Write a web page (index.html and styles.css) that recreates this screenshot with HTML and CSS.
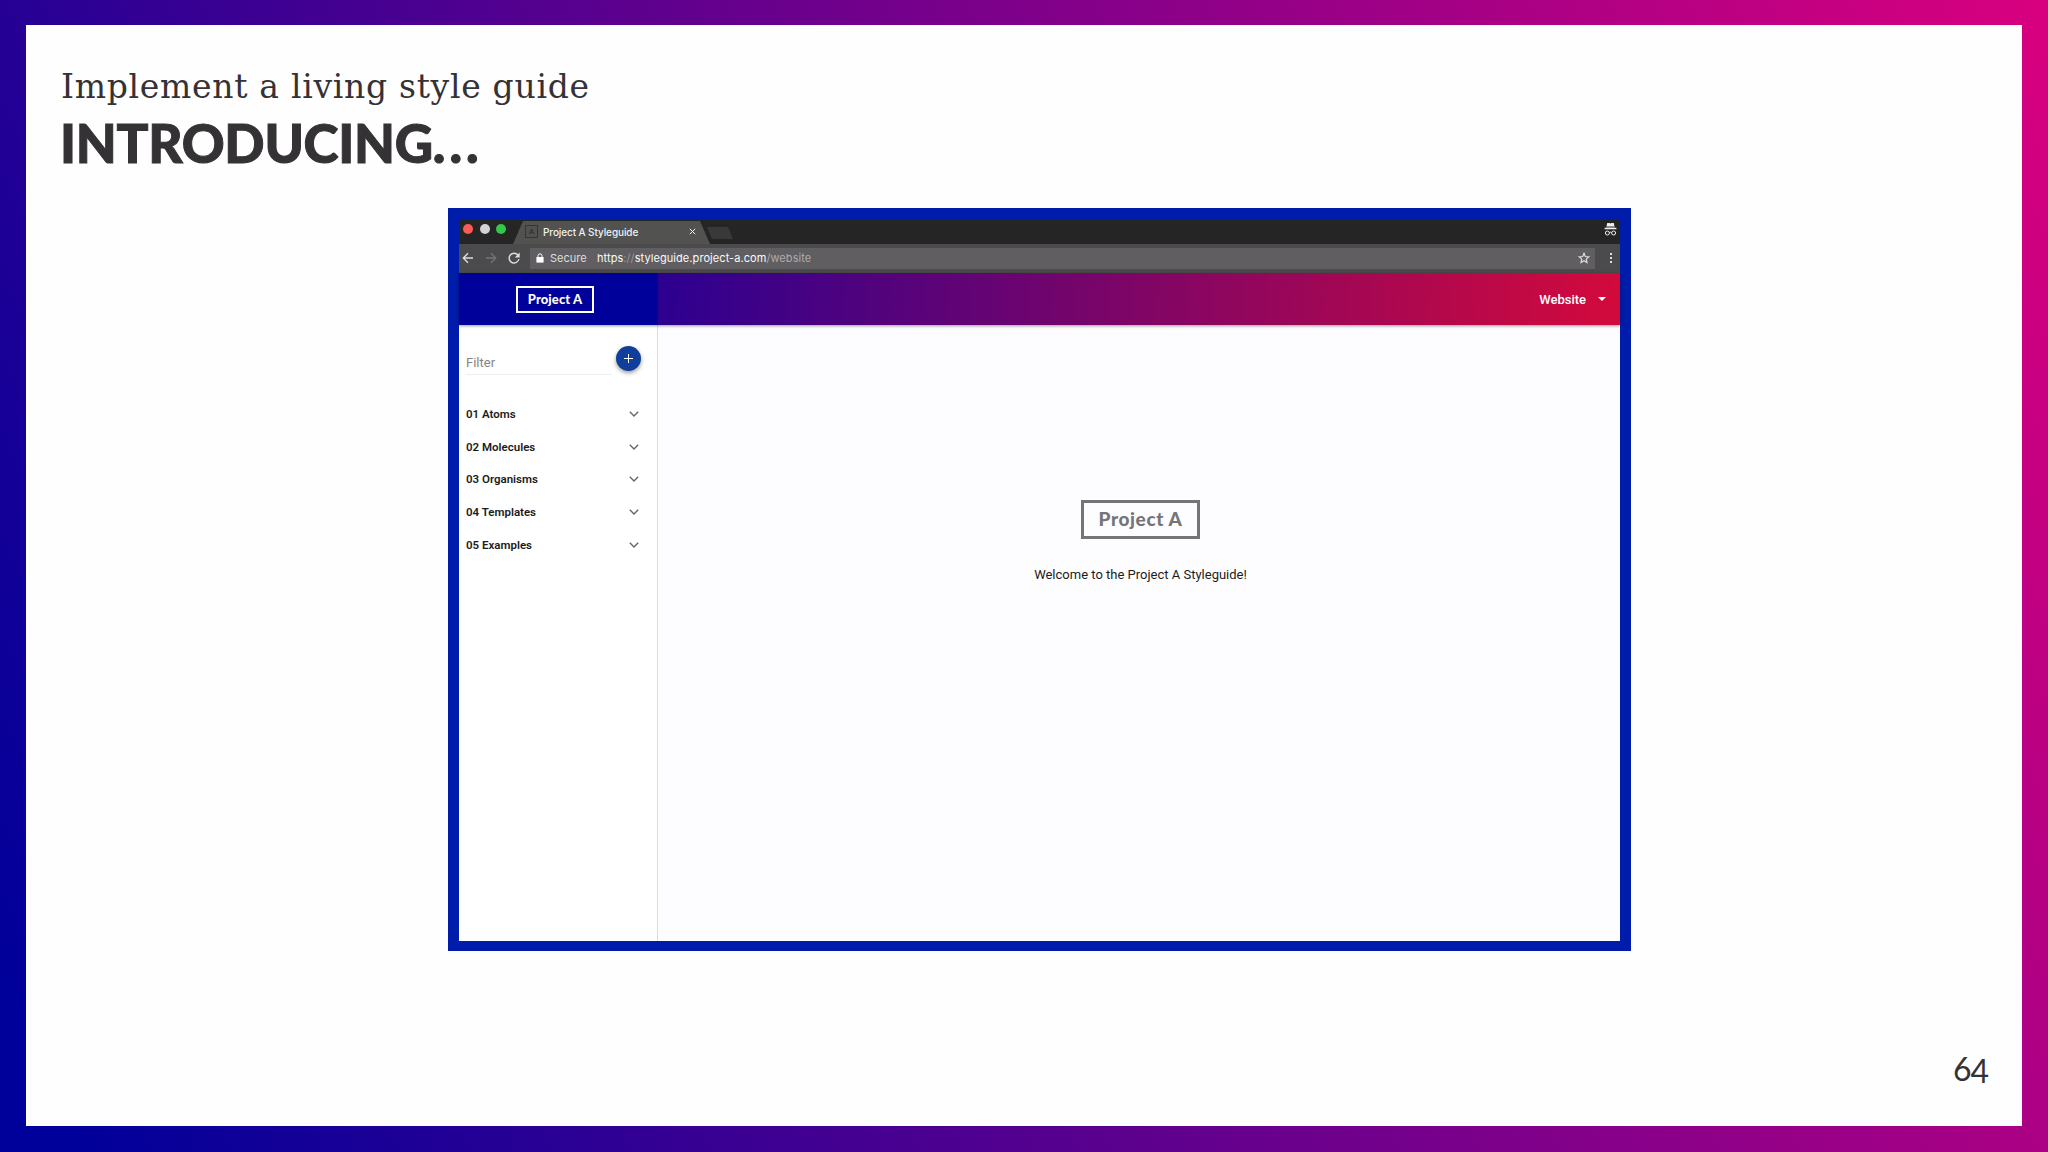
FILE: index.html
```html
<!DOCTYPE html>
<html lang="en">
<head>
    <meta charset="utf-8">
    <title>Introducing...</title>
    <link rel="stylesheet" href="styles.css">
</head>
<body>
    <div class="slide">
        <header class="slide-header">
            <p class="kicker">Implement a living style guide</p>
            <h1>INTRODUCING<span class="dots">...</span></h1>
        </header>

        <div class="browser">
            <div class="tab-strip">
                <div class="lights">
                    <span class="light red"></span>
                    <span class="light grey"></span>
                    <span class="light green"></span>
                </div>
                <div class="tab">
                    <span class="favicon">A</span>
                    <span class="tab-title">Project A Styleguide</span>
                    <svg class="tab-close" viewBox="0 0 7 7"><path d="M.8.8l5.4 5.4M6.2.8L.8 6.2"/></svg>
                </div>
                <span class="new-tab"></span>
                <svg class="incognito" viewBox="0 0 13 13">
                    <path class="solid" d="M3.2 0h2.1l1.2.5L7.7 0h2.1l.6 3H2.6zM2.4 3.5h8.2v.8H2.4zM.6 4.7h11.8v1.5H.6z"/>
                    <circle cx="3.4" cy="10" r="2"/>
                    <circle cx="9.6" cy="10" r="2"/>
                    <path d="M5.4 9.6q1.1-.8 2.2 0"/>
                </svg>
            </div>

            <div class="toolbar">
                <svg class="nav-icon back" viewBox="0 0 12 12"><path d="M11 6H1.5M6 1.3L1.3 6 6 10.7"/></svg>
                <svg class="nav-icon forward" viewBox="0 0 12 12"><path d="M1 6h9.5M6 1.3L10.7 6 6 10.7"/></svg>
                <svg class="nav-icon reload" viewBox="0 0 12 12"><path d="M10 3.2A4.9 4.9 0 1 0 10.9 7"/><path class="solid" d="M11.7.5v5H6.7z"/></svg>
                <div class="omnibox">
                    <svg class="lock" viewBox="0 0 8 10"><path class="solid" d="M.4 4h7.2v5.6H.4z"/><path d="M2 4.5V2.8a2 2 0 0 1 4 0v1.700"/></svg>
                    <span class="secure">Secure</span>
                    <span class="url">https<span class="dim">://</span>styleguide.project-a.com<span class="path">/website</span></span>
                    <svg class="star" viewBox="0 0 12 12"><path d="M6 1.3l1.3 3.2 3.5.3-2.6 2.3.8 3.4L6 8.7l-3 1.8.8-3.4L1.2 4.8l3.5-.3z"/></svg>
                </div>
                <span class="menu"><i></i><i></i><i></i></span>
            </div>

            <div class="app-bar">
                <div class="brand"><span class="logo">Project A</span></div>
                <div class="app-nav">
                    <span>Website</span>
                    <span class="caret"></span>
                </div>
            </div>

            <div class="app">
                <aside class="sidebar">
                    <div class="filter-row">
                        <div class="filter">Filter</div>
                        <div class="fab"><svg viewBox="0 0 9 9"><path d="M4.5 0v9M0 4.5h9"/></svg></div>
                    </div>
                    <ul class="categories">
                        <li>01 Atoms <svg viewBox="0 0 10 6"><path d="M.8.8L5 5 9.2.8"/></svg></li>
                        <li>02 Molecules <svg viewBox="0 0 10 6"><path d="M.8.8L5 5 9.2.8"/></svg></li>
                        <li>03 Organisms <svg viewBox="0 0 10 6"><path d="M.8.8L5 5 9.2.8"/></svg></li>
                        <li>04 Templates <svg viewBox="0 0 10 6"><path d="M.8.8L5 5 9.2.8"/></svg></li>
                        <li>05 Examples <svg viewBox="0 0 10 6"><path d="M.8.8L5 5 9.2.8"/></svg></li>
                    </ul>
                </aside>
                <main class="content">
                    <span class="logo large">Project A</span>
                    <p>Welcome to the Project A Styleguide!</p>
                </main>
            </div>
        </div>

        <footer class="page-number">6<span class="low">4</span></footer>
    </div>
</body>
</html>
```

FILE: styles.css
```css
* {
    box-sizing: border-box;
}
body {
    margin: 0;
    width: 2048px;
    height: 1152px;
    padding: 25px 26px 26px;
    background: linear-gradient(66deg, #00009a 3%, #d9007f);
    overflow: hidden;
}
svg {
    display: block;
    fill: none;
    stroke: currentColor;
    flex: none;
}
svg .solid {
    fill: currentColor;
    stroke: none;
}
.slide {
    display: flex;
    flex-direction: column;
    height: 1101px;
    background: #fefefe;
    color: #353236;
}
.slide-header {
    height: 183px;
    padding: 40px 0 0 35px;
    white-space: nowrap;
}
.kicker {
    margin: 0;
    font-family: "DejaVu Serif", serif;
    font-size: 33px;
    line-height: 44px;
    letter-spacing: 0.7px;
}
h1 {
    margin: 0 0 0 -1px;
    font-family: Lato, sans-serif;
    font-weight: 900;
    font-size: 53px;
    line-height: 67px;
    letter-spacing: -0.3px;
    -webkit-text-stroke: 1px #353236;
}
.dots {
    letter-spacing: 4px;
}

/* browser window */
.browser {
    display: flex;
    flex-direction: column;
    width: 1183px;
    height: 743px;
    margin-left: 422px;
    border: 11px solid #001caa;
    border-bottom-width: 10px;
    font-family: Roboto, sans-serif;
    white-space: nowrap;
}
.tab-strip {
    display: flex;
    height: 25px;
    padding-left: 4px;
    background: #252525;
    color: #f0f0f0;
}
.lights {
    display: flex;
    gap: 6.5px;
    padding-top: 5px;
    width: 50px;
}
.light {
    width: 10px;
    height: 10px;
    border-radius: 50%;
}
.red {
    background: #fc5b57;
}
.grey {
    background: #d4d2d8;
}
.green {
    background: #34c748;
}
.tab {
    display: flex;
    align-items: center;
    width: 197px;
    height: 23px;
    margin-top: 2px;
    padding: 0 14px 2px 12px;
    background: #525250;
    clip-path: polygon(10px 0, 187px 0, 100% 100%, 0 100%);
}
.favicon {
    width: 13px;
    height: 13px;
    border: 1px solid #353535;
    color: #353535;
    font-size: 8px;
    font-weight: 700;
    line-height: 11px;
    text-align: center;
}
.tab-title {
    margin-left: 5px;
    font-family: Inter, sans-serif;
    font-size: 10px;
    font-weight: 500;
    letter-spacing: -0.1px;
}
.tab-close {
    width: 7px;
    height: 7px;
    margin-left: auto;
}
.new-tab {
    width: 26px;
    height: 12px;
    margin: 8px 0 0 -3px;
    background: #393939;
    clip-path: polygon(0 0, 21px 0, 100% 100%, 5px 100%);
}
.incognito {
    width: 13px;
    height: 13px;
    margin: 4px 3px 0 auto;
}
.toolbar {
    display: flex;
    align-items: center;
    height: 29px;
    padding: 0 0 1px 3px;
    background: #4b4a4c;
    color: #dedede;
}
.nav-icon {
    width: 12px;
    height: 12px;
    margin-right: 11px;
    stroke-width: 1.4;
}
.forward {
    color: #757475;
}
.reload {
    margin-right: 10px;
}
.omnibox {
    display: flex;
    align-items: center;
    width: 1065px;
    height: 21px;
    padding: 0 5px 0 6px;
    background: #605e61;
    font-family: Inter, sans-serif;
    font-size: 11px;
}
.lock {
    width: 8px;
    height: 10px;
    color: #fff;
}
.secure {
    width: 47px;
    margin-left: 6px;
}
.url {
    color: #fafafa;
    letter-spacing: 0.07px;
}
.url .dim {
    color: #99979a;
}
.url .path {
    color: #adabae;
}
.star {
    width: 12px;
    height: 12px;
    margin-left: auto;
    stroke-width: 1.2;
}
.menu {
    display: flex;
    flex-direction: column;
    gap: 2px;
    margin-left: 15px;
}
.menu i {
    width: 2px;
    height: 2px;
    background: #dedede;
}

/* styleguide app */
.app-bar {
    display: flex;
    height: 52px;
    flex: none;
    position: relative;
    color: #fff;
    box-shadow: 0 1px 3px rgba(0, 0, 0, 0.4);
}
.brand {
    display: flex;
    align-items: center;
    width: 199px;
    padding-left: 57px;
    background: #00009a;
}
.logo {
    width: 78px;
    height: 27px;
    border: 2px solid currentColor;
    font-family: Lato, sans-serif;
    font-size: 13px;
    font-weight: 900;
    line-height: 22px;
    letter-spacing: 0.1px;
    text-align: center;
}
.app-nav {
    display: flex;
    flex: 1;
    align-items: center;
    justify-content: flex-end;
    gap: 12px;
    padding-right: 14px;
    background: linear-gradient(94deg, #2c0090, #d30a3c);
    font-size: 13px;
    font-weight: 500;
}
.caret {
    border: 4px solid transparent;
    border-top-color: #fff;
    border-bottom: 0;
}
.app {
    display: flex;
    flex: 1;
}
.sidebar {
    width: 199px;
    padding: 21px 18px 0 7px;
    background: #fff;
    border-right: 1px solid #dcdcde;
}
.filter-row {
    display: flex;
    justify-content: space-between;
    align-items: flex-start;
}
.filter {
    width: 146px;
    height: 29px;
    padding-top: 9px;
    border-bottom: 1px solid #eee;
    color: #858585;
    font-size: 13px;
    line-height: 16px;
}
.fab {
    display: grid;
    place-items: center;
    width: 25px;
    height: 25px;
    margin-right: -2px;
    border-radius: 50%;
    background: #103f9b;
    color: #fff;
    box-shadow: 0 2px 4px rgba(0, 0, 0, 0.4);
}
.fab svg {
    width: 9px;
    height: 9px;
}
.categories {
    margin: 23px 0 0;
    padding: 0;
    list-style: none;
    color: #1c1c1c;
    font-size: 11.5px;
    font-weight: 600;
}
.categories li {
    display: flex;
    align-items: center;
    justify-content: space-between;
    height: 32.6px;
}
.categories svg {
    width: 10px;
    height: 6px;
    color: #666;
    stroke-width: 1.4;
}
.content {
    display: flex;
    flex: 1;
    flex-direction: column;
    align-items: center;
    padding: 175px 0 0 3px;
    background: #fdfcff;
}
.content p {
    margin: 28px 0 0;
    color: #1c1c1c;
    font-size: 13px;
    line-height: 16px;
}
.logo.large {
    width: 119px;
    height: 39px;
    border-width: 3px;
    color: #757477;
    font-size: 19px;
    line-height: 32px;
    letter-spacing: 0.6px;
}

.page-number {
    margin: 93px 34px 0 auto;
    font-family: Lato, sans-serif;
    font-size: 32px;
    line-height: 50px;
    letter-spacing: -1px;
}
.page-number .low {
    position: relative;
    top: 2px;
}
```
